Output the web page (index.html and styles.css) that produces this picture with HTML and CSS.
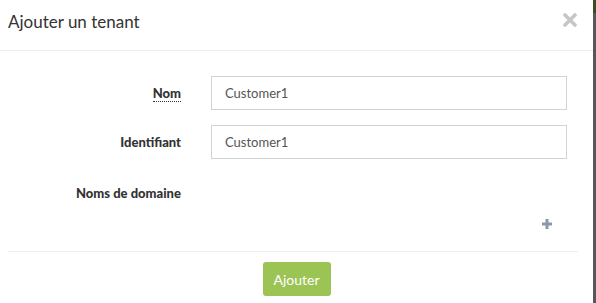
FILE: index.html
```html
<!DOCTYPE html>
<html lang="fr">
<head>
    <meta charset="UTF-8">
    <title>Ajouter un tenant</title>
    <link rel="stylesheet" href="styles.css">
</head>
<body>
    <div class="modal">
        <!-- Header -->
        <div class="modal-header">
            <h4 class="modal-title">Ajouter un tenant</h4>
            <span class="close">
                <svg width="14" height="14" viewBox="0 0 14 14"><path d="M2 2L12 12M12 2L2 12" stroke="#c6c6c6" stroke-width="3.6" stroke-linecap="round"/></svg>
            </span>
        </div>

        <!-- Form -->
        <div class="modal-body">
            <div class="form-row">
                <label class="form-label"><abbr title="Nom du tenant">Nom</abbr></label>
                <div class="form-field"><input class="form-input" type="text" value="Customer1"></div>
            </div>
            <div class="form-row">
                <label class="form-label">Identifiant</label>
                <div class="form-field"><input class="form-input" type="text" value="Customer1"></div>
            </div>
            <div class="domains">
                <div class="domains-title">Noms de domaine</div>
                <div class="domains-add">
                    <svg width="10" height="10" viewBox="0 0 10 10"><path d="M3.5 0h3v3.5H10v3H6.5V10h-3V6.5H0v-3h3.5z" fill="#8d97aa"/></svg>
                </div>
            </div>
        </div>

        <!-- Footer -->
        <div class="modal-footer">
            <button class="btn-add" type="button">Ajouter</button>
        </div>
    </div>
</body>
</html>
```

FILE: styles.css
```css
body {
    margin: 0;
    height: 303px;
    font-family: Lato, "Open Sans", sans-serif;
    background: linear-gradient(#3d4a22 0, #3d4a22 13px, #575757 13px);
}

.modal {
    width: 593px;
    height: 303px;
    background-color: #fff;
}

.modal-header {
    height: 51px;
    border-bottom: 1px solid #eee;
    display: flex;
    align-items: center;
    justify-content: space-between;
    padding: 0 16px 7px 8px;
    box-sizing: border-box;
}

.modal-title {
    margin: 0;
    font-size: 17px;
    font-weight: normal;
    color: #333;
}

.close {
    display: flex;
    margin-top: -3px;
}

.modal-body {
    padding: 25px 26px 0 0;
}

.form-row {
    display: flex;
    align-items: center;
    margin-bottom: 15px;
}

.form-label {
    width: 181px;
    text-align: right;
    font-size: 13px;
    font-weight: 900;
    color: #333;
}

.form-label abbr {
    text-decoration: none;
    border-bottom: 1px dotted #333;
}

.form-field {
    flex: 1;
    padding-left: 30px;
}

.form-input {
    width: 100%;
    height: 34px;
    box-sizing: border-box;
    border: 1px solid #d2d2da;
    padding: 0 13px;
    font-family: inherit;
    font-size: 13px;
    color: #555;
    outline: none;
}

.domains {
    padding-left: 76px;
    padding-top: 11px;
    height: 77px;
    box-sizing: border-box;
}

.domains-title {
    font-size: 13px;
    font-weight: 900;
    color: #333;
}

.domains-add {
    display: flex;
    justify-content: flex-end;
    padding-top: 18px;
    padding-right: 15px;
}

.modal-footer {
    margin: 0 15px 0 8px;
    border-top: 1px solid #eee;
    padding-top: 10px;
    display: flex;
    justify-content: center;
}

.btn-add {
    width: 68px;
    height: 34px;
    border: none;
    border-radius: 3px;
    background-color: #9bc454;
    color: #fff;
    font-family: inherit;
    font-size: 14px;
    margin-left: 7px;
}
```
